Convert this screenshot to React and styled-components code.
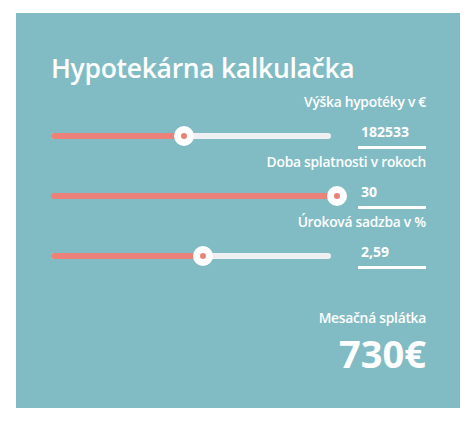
import { useState } from "react";
import styled, { createGlobalStyle } from "styled-components";

const GlobalStyle = createGlobalStyle`
  body {
    margin: 0;
    background: #ffffff;
    font-family: "Open Sans", "Liberation Sans", sans-serif;
  }
`;

const Panel = styled.main`
  box-sizing: border-box;
  width: 444px;
  height: 395px;
  margin: 13px 0 0 16px;
  padding: 39px 34px 0 35px;
  background: #81bcc4;
  color: #ffffff;
  display: flex;
  flex-direction: column;
`;

const Title = styled.h1`
  margin: 0 0 8px;
  font-size: 26.5px;
  line-height: 32px;
  font-weight: 600;
  letter-spacing: -0.3px;
`;

const Fields = styled.div`
  display: flex;
  flex-direction: column;
  gap: 2px;
`;

const Field = styled.div`
  display: flex;
  flex-direction: column;
`;

const Label = styled.label`
  align-self: flex-end;
  font-size: 13.8px;
  line-height: 20px;
  font-weight: 600;
  letter-spacing: -0.25px;
`;

const Row = styled.div`
  margin-top: 10px;
  height: 28px;
  display: flex;
  align-items: center;
  gap: 27px;
`;

const Slider = styled.div`
  position: relative;
  width: 280px;
  height: 20px;
  display: flex;
  align-items: center;
`;

const Rail = styled.div`
  width: 100%;
  height: 6px;
  border-radius: 3px;
  background: #eef0f1;
  overflow: hidden;
`;

const Fill = styled.div`
  height: 100%;
  background: #ec8179;
`;

const Thumb = styled.span`
  position: absolute;
  top: 0;
  width: 20px;
  height: 20px;
  margin-left: -10px;
  border-radius: 50%;
  background: #ffffff;
  display: flex;
  align-items: center;
  justify-content: center;
  &::after {
    content: "";
    width: 6px;
    height: 6px;
    border-radius: 50%;
    background: #ec8179;
  }
`;

const Value = styled.input`
  box-sizing: border-box;
  width: 68px;
  height: 28px;
  margin-top: -2px;
  padding: 0 0 4px 3px;
  border: 0;
  border-bottom: 3px solid #ffffff;
  background: transparent;
  color: #ffffff;
  font-family: inherit;
  font-size: 14px;
  font-weight: 700;
  outline: none;
`;

const Result = styled.div`
  margin-top: 38px;
  display: flex;
  flex-direction: column;
  align-items: flex-end;
`;

const ResultLabel = styled.span`
  font-size: 13.8px;
  line-height: 20px;
  font-weight: 600;
  letter-spacing: -0.25px;
`;

const Amount = styled.strong`
  margin-top: 3px;
  font-size: 38px;
  line-height: 44px;
  font-weight: 700;
`;

function RangeField({ label, value, min, max, onChange }) {
  const pct = Math.min(1, Math.max(0, (parseFloat(String(value).replace(",", ".")) - min) / (max - min)));
  const pos = `calc(${pct} * (100% + 6px))`;
  return (
    <Field>
      <Label>{label}</Label>
      <Row>
        <Slider>
          <Rail>
            <Fill style={{ width: pos }} />
          </Rail>
          <Thumb style={{ left: pos }} />
        </Slider>
        <Value value={value} onChange={(e) => onChange(e.target.value)} />
      </Row>
    </Field>
  );
}

function monthly(amount, years, rate) {
  const r = parseFloat(String(rate).replace(",", ".")) / 100 / 12;
  const n = years * 12;
  if (!r) return amount / n;
  return (amount * r) / (1 - Math.pow(1 + r, -n));
}

export default function App() {
  const [amount, setAmount] = useState("182533");
  const [years, setYears] = useState("30");
  const [rate, setRate] = useState("2,59");

  const payment = Math.round(monthly(Number(amount), Number(years), rate));

  return (
    <>
      <GlobalStyle />
      <Panel>
        <Title>Hypotekárna kalkulačka</Title>
        <Fields>
          <RangeField label="Výška hypotéky v €" value={amount} min={10000} max={380000} onChange={setAmount} />
          <RangeField label="Doba splatnosti v rokoch" value={years} min={1} max={30} onChange={setYears} />
          <RangeField label="Úroková sadzba v %" value={rate} min={0.1} max={4.8} onChange={setRate} />
        </Fields>
        <Result>
          <ResultLabel>Mesačná splátka</ResultLabel>
          <Amount>{payment}€</Amount>
        </Result>
      </Panel>
    </>
  );
}
